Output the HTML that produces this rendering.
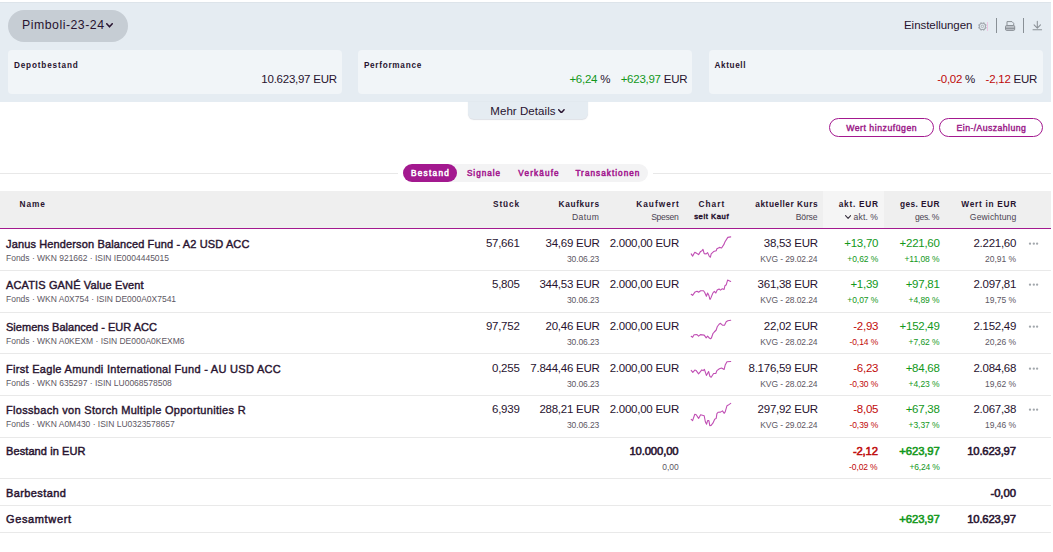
<!DOCTYPE html>
<html lang="de">
<head>
<meta charset="utf-8">
<title>Depot</title>
<style>
*{box-sizing:border-box;margin:0;padding:0}
html,body{width:1053px;height:552px;overflow:hidden;background:#fff}
body{font-family:"Liberation Sans",sans-serif;color:#28132f;position:relative}
.t{position:absolute;white-space:nowrap}
.b{position:absolute;display:block}
</style>
</head>
<body>
<div class="b" style="left:0px;top:2px;width:1051px;height:100.4px;background:#e5ecf2;border-top:1px solid #dde4ea;"></div>
<div class="b" style="left:8px;top:10px;width:120px;height:32px;background:#c6cdd4;border-radius:16px;"></div>
<div class="t" style="top:17.84px;font-size:12.3px;line-height:15px;color:#28132f;letter-spacing:0.509px;left:22px;">Pimboli-23-24</div>
<svg class="b" style="left:105.8px;top:23.2px" width="7" height="4.6" viewBox="0 0 7 4.6"><path d="M0.75 0.75 L3.5 3.8499999999999996 L6.25 0.75" fill="none" stroke="#28132f" stroke-width="1.5" stroke-linecap="round" stroke-linejoin="round"/></svg>
<div class="t" style="top:18.22px;font-size:11.5px;line-height:14px;letter-spacing:-0.05px;left:904px;">Einstellungen</div>
<svg class="b" style="left:0;top:0" width="1053" height="40"><g fill="none" stroke="#a3a9af"><circle cx="982.4" cy="26.4" r="3.1" stroke-width="1.1"/><circle cx="982.4" cy="26.4" r="1.25" stroke-width=".8"/><g stroke-width="1.7"><line x1="985.26" y1="27.59" x2="986.33" y2="28.03"/><line x1="983.59" y1="29.26" x2="984.03" y2="30.33"/><line x1="981.21" y1="29.26" x2="980.77" y2="30.33"/><line x1="979.54" y1="27.59" x2="978.47" y2="28.03"/><line x1="979.54" y1="25.21" x2="978.47" y2="24.77"/><line x1="981.21" y1="23.54" x2="980.77" y2="22.47"/><line x1="983.59" y1="23.54" x2="984.03" y2="22.47"/><line x1="985.26" y1="25.21" x2="986.33" y2="24.77"/></g></g></svg>
<div class="b" style="left:987.4px;top:22px;width:1px;height:9px;background:#ecc6e2;"></div>
<div class="b" style="left:996px;top:18px;width:1px;height:15px;background:#899096;"></div>
<svg class="b" style="left:0;top:0" width="1053" height="40"><g fill="none" stroke="#8b9197" stroke-width="1" stroke-linejoin="round"><path d="M1007 25.6V21.6h5l1.700 1.700V25.600"/><rect x="1005.5" y="25.5" width="9.200" height="4.900" rx="1.200" fill="#8b9197" fill-opacity=".45"/><path d="M1005.500 28.300h9.200" stroke="#7f868c" stroke-width=".9"/></g></svg>
<div class="b" style="left:1023px;top:18px;width:1px;height:15px;background:#899096;"></div>
<svg class="b" style="left:0;top:0" width="1053" height="40"><g fill="none" stroke="#8b9197" stroke-width="1.05" stroke-linecap="round" stroke-linejoin="round"><path d="M1037.300 21.300v6.600M1034.100 24.900l3.200 3.200 3.200-3.200M1033 29.700h8.600"/></g></svg>
<div class="b" style="left:8px;top:50px;width:334px;height:43.8px;background:#f1f5f8;border-radius:4px;"></div>
<div class="b" style="left:357.8px;top:50px;width:334.6px;height:43.8px;background:#f1f5f8;border-radius:4px;"></div>
<div class="b" style="left:709.3px;top:50px;width:333.8px;height:43.8px;background:#f1f5f8;border-radius:4px;"></div>
<div class="t" style="top:61.16px;font-size:8.2px;line-height:10px;font-weight:bold;letter-spacing:0.848px;left:13.9px;">Depotbestand</div>
<div class="t" style="top:61.16px;font-size:8.2px;line-height:10px;font-weight:bold;letter-spacing:0.727px;left:363.9px;">Performance</div>
<div class="t" style="top:61.16px;font-size:8.2px;line-height:10px;font-weight:bold;letter-spacing:0.61px;left:714.5px;">Aktuell</div>
<div class="t" style="top:72.02px;font-size:11.5px;line-height:14px;letter-spacing:-0.25px;right:716.25px;">10.623,97 EUR</div>
<div class="t" style="top:72.02px;font-size:11.5px;line-height:14px;letter-spacing:-0.25px;right:442.85px;"><span style="color:#12981a">+6,24</span> %</div>
<div class="t" style="top:72.02px;font-size:11.5px;line-height:14px;letter-spacing:-0.25px;right:365.75px;"><span style="color:#12981a">+623,97</span> EUR</div>
<div class="t" style="top:72.02px;font-size:11.5px;line-height:14px;letter-spacing:-0.25px;right:77.95px;"><span style="color:#bf0a0a">-0,02</span> %</div>
<div class="t" style="top:72.02px;font-size:11.5px;line-height:14px;letter-spacing:-0.25px;right:15.95px;"><span style="color:#bf0a0a">-2,12</span> EUR</div>
<div class="b" style="left:468px;top:101.5px;width:120px;height:17.4px;background:#e5ecf2;border-radius:0 0 6px 6px;box-shadow:0 .5px 1px rgba(120,130,150,.25);"></div>
<div class="t" style="top:104.32px;font-size:11.5px;line-height:14px;letter-spacing:0.059px;left:490.3px;">Mehr Details</div>
<svg class="b" style="left:558.3px;top:108.6px" width="6.8" height="4.5" viewBox="0 0 6.8 4.5"><path d="M0.7 0.7 L3.4 3.8 L6.1 0.7" fill="none" stroke="#28132f" stroke-width="1.4" stroke-linecap="round" stroke-linejoin="round"/></svg>
<div class="b" style="left:829px;top:118px;width:105px;height:19px;background:#fff;border:1px solid #a3198f;border-radius:10px;"></div>
<div class="b" style="left:939px;top:118px;width:104px;height:19px;background:#fff;border:1px solid #a3198f;border-radius:10px;"></div>
<div class="t" style="top:122.99px;font-size:8.7px;line-height:11px;color:#9a1787;-webkit-text-stroke:0.4px #9a1787;letter-spacing:0.529px;left:881.66px;transform:translateX(-50%);">Wert hinzufügen</div>
<div class="t" style="top:122.99px;font-size:8.7px;line-height:11px;color:#9a1787;-webkit-text-stroke:0.4px #9a1787;letter-spacing:0.424px;left:991.41px;transform:translateX(-50%);">Ein-/Auszahlung</div>
<div class="b" style="left:0px;top:173px;width:1051px;height:1px;background:#e8e8e8;"></div>
<div class="b" style="left:398px;top:163px;width:254.5px;height:21px;background:#fff;"></div>
<div class="b" style="left:403px;top:164px;width:245px;height:18px;background:#f3f3f4;border-radius:9px;"></div>
<div class="b" style="left:403px;top:164px;width:54px;height:18px;background:#a3198f;border-radius:9px;"></div>
<div class="t" style="top:168.76px;font-size:8.2px;line-height:10px;color:#fff;-webkit-text-stroke:0.5px #fff;letter-spacing:1.302px;left:411px;">Bestand</div>
<div class="t" style="top:168.76px;font-size:8.2px;line-height:10px;color:#a3198f;-webkit-text-stroke:0.5px #a3198f;letter-spacing:0.991px;left:466.9px;">Signale</div>
<div class="t" style="top:168.76px;font-size:8.2px;line-height:10px;color:#a3198f;-webkit-text-stroke:0.5px #a3198f;letter-spacing:1.147px;left:518.3px;">Verkäufe</div>
<div class="t" style="top:168.76px;font-size:8.2px;line-height:10px;color:#a3198f;-webkit-text-stroke:0.5px #a3198f;letter-spacing:1.037px;left:575.4px;">Transaktionen</div>
<div class="b" style="left:0px;top:191px;width:1051px;height:37.3px;background:#efefef;"></div>
<div class="b" style="left:823px;top:191px;width:61px;height:37.3px;background:#f5f5f5;"></div>
<div class="b" style="left:0px;top:228px;width:1051px;height:1.3px;background:#a3198f;"></div>
<div class="t" style="top:199.12px;font-size:8.3px;line-height:10px;font-weight:bold;letter-spacing:0.998px;left:19.4px;">Name</div>
<div class="t" style="top:199.12px;font-size:8.3px;line-height:10px;font-weight:bold;letter-spacing:0.824px;right:533.18px;">Stück</div>
<div class="t" style="top:199.12px;font-size:8.3px;line-height:10px;font-weight:bold;letter-spacing:0.646px;right:453.35px;">Kaufkurs</div>
<div class="t" style="top:211.52px;font-size:8.6px;line-height:11px;color:#4b4452;letter-spacing:0.442px;right:453.56px;">Datum</div>
<div class="t" style="top:199.12px;font-size:8.3px;line-height:10px;font-weight:bold;letter-spacing:1.027px;right:373.17px;">Kaufwert</div>
<div class="t" style="top:211.52px;font-size:8.6px;line-height:11px;color:#4b4452;letter-spacing:-0.294px;right:374.49px;">Spesen</div>
<div class="t" style="top:199.12px;font-size:8.3px;line-height:10px;font-weight:bold;letter-spacing:0.526px;right:234.97px;">aktueller Kurs</div>
<div class="t" style="top:211.52px;font-size:8.6px;line-height:11px;color:#4b4452;letter-spacing:-0.167px;right:235.67px;">Börse</div>
<div class="t" style="top:199.12px;font-size:8.3px;line-height:10px;font-weight:bold;letter-spacing:0.738px;right:174.26px;">akt. EUR</div>
<div class="t" style="top:211.52px;font-size:8.6px;line-height:11px;color:#4b4452;letter-spacing:0.101px;right:174.90px;">akt. %</div>
<div class="t" style="top:199.12px;font-size:8.3px;line-height:10px;font-weight:bold;letter-spacing:0.452px;right:113.05px;">ges. EUR</div>
<div class="t" style="top:211.52px;font-size:8.6px;line-height:11px;color:#4b4452;letter-spacing:-0.378px;right:113.88px;">ges. %</div>
<div class="t" style="top:199.12px;font-size:8.3px;line-height:10px;font-weight:bold;letter-spacing:0.719px;right:35.98px;">Wert in EUR</div>
<div class="t" style="top:211.52px;font-size:8.6px;line-height:11px;color:#4b4452;letter-spacing:0.121px;right:36.58px;">Gewichtung</div>
<div class="t" style="top:199.12px;font-size:8.3px;line-height:10px;font-weight:bold;letter-spacing:1.056px;left:711.93px;transform:translateX(-50%);">Chart</div>
<div class="t" style="top:212.33px;font-size:7.7px;line-height:10px;-webkit-text-stroke:0.45px #28132f;letter-spacing:0.555px;left:711.68px;transform:translateX(-50%);">seit Kauf</div>
<svg class="b" style="left:845.3px;top:215.3px" width="6.2" height="3.9" viewBox="0 0 6.2 3.9"><path d="M0.55 0.55 L3.1 3.3499999999999996 L5.65 0.55" fill="none" stroke="#3a3340" stroke-width="1.1" stroke-linecap="round" stroke-linejoin="round"/></svg>
<div class="b" style="left:0px;top:270px;width:1051px;height:1px;background:#e9e9e9;"></div>
<div class="t" style="top:237.49px;font-size:11px;line-height:14px;-webkit-text-stroke:0.4px #28132f;letter-spacing:0.135px;left:6px;">Janus Henderson Balanced Fund - A2 USD ACC</div>
<div class="t" style="top:252.85px;font-size:8.5px;line-height:11px;color:#5d5763;letter-spacing:-0.013px;left:6px;">Fonds · WKN 921662 · ISIN IE0004445015</div>
<div class="t" style="top:236.32px;font-size:11.5px;line-height:14px;letter-spacing:-0.25px;right:533.45px;">57,661</div>
<div class="t" style="top:236.32px;font-size:11.5px;line-height:14px;letter-spacing:-0.25px;right:453.45px;">34,69 EUR</div>
<div class="t" style="top:253.85px;font-size:8.5px;line-height:11px;color:#5d5763;letter-spacing:-0.1px;right:453.80px;">30.06.23</div>
<div class="t" style="top:236.32px;font-size:11.5px;line-height:14px;letter-spacing:-0.25px;right:374.05px;">2.000,00 EUR</div>
<div class="t" style="top:236.32px;font-size:11.5px;line-height:14px;letter-spacing:-0.25px;right:235.25px;">38,53 EUR</div>
<div class="t" style="top:253.85px;font-size:8.5px;line-height:11px;color:#5d5763;letter-spacing:-0.107px;right:235.61px;">KVG - 29.02.24</div>
<div class="t" style="top:236.32px;font-size:11.5px;line-height:14px;color:#12981a;letter-spacing:-0.25px;right:174.75px;">+13,70</div>
<div class="t" style="top:253.85px;font-size:8.5px;line-height:11px;color:#12981a;letter-spacing:-0.05px;right:174.65px;">+0,62 %</div>
<div class="t" style="top:236.32px;font-size:11.5px;line-height:14px;color:#12981a;letter-spacing:-0.25px;right:113.35px;">+221,60</div>
<div class="t" style="top:253.85px;font-size:8.5px;line-height:11px;color:#12981a;letter-spacing:-0.05px;right:113.45px;">+11,08 %</div>
<div class="t" style="top:236.32px;font-size:11.5px;line-height:14px;letter-spacing:-0.25px;right:36.85px;">2.221,60</div>
<div class="t" style="top:253.85px;font-size:8.5px;line-height:11px;color:#5d5763;letter-spacing:-0.05px;right:37.05px;">20,91 %</div>
<svg class="b" style="left:1026px;top:239px" width="16" height="10"><g fill="#a2a7ac"><circle cx="4" cy="4.700" r="1.150"/><circle cx="7.800" cy="4.700" r="1.150"/><circle cx="11.100" cy="4.700" r="1.150"/></g></svg>
<svg class="b" style="left:0;top:0" width="1053" height="552"><polyline points="691.2,253.9 692.6,256.1 694.8,252.3 696.6,253.3 698.6,254.6 700.6,251.4 702.0,250.7 703.0,249.4 704.2,253.6 706.2,253.9 707.6,252.6 709.3,256.4 710.4,257.2 711.2,253.9 713.6,251.6 716.2,250.7 716.9,248.7 719.4,247.4 721.6,248.0 724.1,244.1 724.9,242.0 727.8,237.4 730.7,236.9" fill="none" stroke="#c04fb4" stroke-width="1.1" stroke-linejoin="round" stroke-linecap="round"/></svg>
<div class="b" style="left:0px;top:312px;width:1051px;height:1px;background:#e9e9e9;"></div>
<div class="t" style="top:278.49px;font-size:11px;line-height:14px;-webkit-text-stroke:0.4px #28132f;letter-spacing:0.132px;left:6px;">ACATIS GANÉ Value Event</div>
<div class="t" style="top:293.85px;font-size:8.5px;line-height:11px;color:#5d5763;letter-spacing:-0.013px;left:6px;">Fonds · WKN A0X754 · ISIN DE000A0X7541</div>
<div class="t" style="top:277.32px;font-size:11.5px;line-height:14px;letter-spacing:-0.25px;right:533.45px;">5,805</div>
<div class="t" style="top:277.32px;font-size:11.5px;line-height:14px;letter-spacing:-0.25px;right:453.45px;">344,53 EUR</div>
<div class="t" style="top:294.85px;font-size:8.5px;line-height:11px;color:#5d5763;letter-spacing:-0.1px;right:453.80px;">30.06.23</div>
<div class="t" style="top:277.32px;font-size:11.5px;line-height:14px;letter-spacing:-0.25px;right:374.05px;">2.000,00 EUR</div>
<div class="t" style="top:277.32px;font-size:11.5px;line-height:14px;letter-spacing:-0.25px;right:235.25px;">361,38 EUR</div>
<div class="t" style="top:294.85px;font-size:8.5px;line-height:11px;color:#5d5763;letter-spacing:-0.107px;right:235.61px;">KVG - 28.02.24</div>
<div class="t" style="top:277.32px;font-size:11.5px;line-height:14px;color:#12981a;letter-spacing:-0.25px;right:174.75px;">+1,39</div>
<div class="t" style="top:294.85px;font-size:8.5px;line-height:11px;color:#12981a;letter-spacing:-0.05px;right:174.65px;">+0,07 %</div>
<div class="t" style="top:277.32px;font-size:11.5px;line-height:14px;color:#12981a;letter-spacing:-0.25px;right:113.35px;">+97,81</div>
<div class="t" style="top:294.85px;font-size:8.5px;line-height:11px;color:#12981a;letter-spacing:-0.05px;right:113.45px;">+4,89 %</div>
<div class="t" style="top:277.32px;font-size:11.5px;line-height:14px;letter-spacing:-0.25px;right:36.85px;">2.097,81</div>
<div class="t" style="top:294.85px;font-size:8.5px;line-height:11px;color:#5d5763;letter-spacing:-0.05px;right:37.05px;">19,75 %</div>
<svg class="b" style="left:1026px;top:280px" width="16" height="10"><g fill="#a2a7ac"><circle cx="4" cy="4.700" r="1.150"/><circle cx="7.800" cy="4.700" r="1.150"/><circle cx="11.100" cy="4.700" r="1.150"/></g></svg>
<svg class="b" style="left:0;top:0" width="1053" height="552"><polyline points="691.2,294.3 692.6,295.3 695.1,291.9 697.0,291.2 698.6,292.3 700.6,290.7 703.5,290.7 704.6,292.3 706.4,296.3 707.6,293.0 708.9,295.6 710.0,299.4 711.1,297.4 712.9,293.0 714.3,291.4 715.8,293.0 717.2,290.1 719.1,289.0 720.5,290.1 722.3,288.8 724.1,289.4 724.9,285.8 726.3,284.7 727.6,280.1 730.7,281.4" fill="none" stroke="#c04fb4" stroke-width="1.1" stroke-linejoin="round" stroke-linecap="round"/></svg>
<div class="b" style="left:0px;top:353px;width:1051px;height:1px;background:#e9e9e9;"></div>
<div class="t" style="top:320.49px;font-size:11px;line-height:14px;-webkit-text-stroke:0.4px #28132f;letter-spacing:0.024px;left:6px;">Siemens Balanced - EUR ACC</div>
<div class="t" style="top:335.85px;font-size:8.5px;line-height:11px;color:#5d5763;letter-spacing:-0.013px;left:6px;">Fonds · WKN A0KEXM · ISIN DE000A0KEXM6</div>
<div class="t" style="top:319.32px;font-size:11.5px;line-height:14px;letter-spacing:-0.25px;right:533.45px;">97,752</div>
<div class="t" style="top:319.32px;font-size:11.5px;line-height:14px;letter-spacing:-0.25px;right:453.45px;">20,46 EUR</div>
<div class="t" style="top:336.85px;font-size:8.5px;line-height:11px;color:#5d5763;letter-spacing:-0.1px;right:453.80px;">30.06.23</div>
<div class="t" style="top:319.32px;font-size:11.5px;line-height:14px;letter-spacing:-0.25px;right:374.05px;">2.000,00 EUR</div>
<div class="t" style="top:319.32px;font-size:11.5px;line-height:14px;letter-spacing:-0.25px;right:235.25px;">22,02 EUR</div>
<div class="t" style="top:336.85px;font-size:8.5px;line-height:11px;color:#5d5763;letter-spacing:-0.107px;right:235.61px;">KVG - 28.02.24</div>
<div class="t" style="top:319.32px;font-size:11.5px;line-height:14px;color:#bf0a0a;letter-spacing:-0.25px;right:174.75px;">-2,93</div>
<div class="t" style="top:336.85px;font-size:8.5px;line-height:11px;color:#bf0a0a;letter-spacing:-0.05px;right:174.65px;">-0,14 %</div>
<div class="t" style="top:319.32px;font-size:11.5px;line-height:14px;color:#12981a;letter-spacing:-0.25px;right:113.35px;">+152,49</div>
<div class="t" style="top:336.85px;font-size:8.5px;line-height:11px;color:#12981a;letter-spacing:-0.05px;right:113.45px;">+7,62 %</div>
<div class="t" style="top:319.32px;font-size:11.5px;line-height:14px;letter-spacing:-0.25px;right:36.85px;">2.152,49</div>
<div class="t" style="top:336.85px;font-size:8.5px;line-height:11px;color:#5d5763;letter-spacing:-0.05px;right:37.05px;">20,26 %</div>
<svg class="b" style="left:1026px;top:322px" width="16" height="10"><g fill="#a2a7ac"><circle cx="4" cy="4.700" r="1.150"/><circle cx="7.800" cy="4.700" r="1.150"/><circle cx="11.100" cy="4.700" r="1.150"/></g></svg>
<svg class="b" style="left:0;top:0" width="1053" height="552"><polyline points="691.2,336.3 692.6,337.3 694.1,334.7 697.0,334.6 698.6,336.2 700.4,334.6 704.2,335.1 706.2,337.8 707.6,336.2 709.3,338.0 710.4,338.7 711.4,338.0 712.9,333.7 714.3,332.0 716.2,330.0 717.2,326.8 719.1,324.2 720.5,323.3 722.7,325.3 724.5,325.2 726.2,321.7 727.8,320.8 730.7,320.2" fill="none" stroke="#c04fb4" stroke-width="1.1" stroke-linejoin="round" stroke-linecap="round"/></svg>
<div class="b" style="left:0px;top:395px;width:1051px;height:1px;background:#e9e9e9;"></div>
<div class="t" style="top:362.49px;font-size:11px;line-height:14px;-webkit-text-stroke:0.4px #28132f;letter-spacing:0.291px;left:6px;">First Eagle Amundi International Fund - AU USD ACC</div>
<div class="t" style="top:377.85px;font-size:8.5px;line-height:11px;color:#5d5763;letter-spacing:-0.013px;left:6px;">Fonds · WKN 635297 · ISIN LU0068578508</div>
<div class="t" style="top:361.32px;font-size:11.5px;line-height:14px;letter-spacing:-0.25px;right:533.45px;">0,255</div>
<div class="t" style="top:361.32px;font-size:11.5px;line-height:14px;letter-spacing:-0.25px;right:453.45px;">7.844,46 EUR</div>
<div class="t" style="top:378.85px;font-size:8.5px;line-height:11px;color:#5d5763;letter-spacing:-0.1px;right:453.80px;">30.06.23</div>
<div class="t" style="top:361.32px;font-size:11.5px;line-height:14px;letter-spacing:-0.25px;right:374.05px;">2.000,00 EUR</div>
<div class="t" style="top:361.32px;font-size:11.5px;line-height:14px;letter-spacing:-0.25px;right:235.25px;">8.176,59 EUR</div>
<div class="t" style="top:378.85px;font-size:8.5px;line-height:11px;color:#5d5763;letter-spacing:-0.107px;right:235.61px;">KVG - 28.02.24</div>
<div class="t" style="top:361.32px;font-size:11.5px;line-height:14px;color:#bf0a0a;letter-spacing:-0.25px;right:174.75px;">-6,23</div>
<div class="t" style="top:378.85px;font-size:8.5px;line-height:11px;color:#bf0a0a;letter-spacing:-0.05px;right:174.65px;">-0,30 %</div>
<div class="t" style="top:361.32px;font-size:11.5px;line-height:14px;color:#12981a;letter-spacing:-0.25px;right:113.35px;">+84,68</div>
<div class="t" style="top:378.85px;font-size:8.5px;line-height:11px;color:#12981a;letter-spacing:-0.05px;right:113.45px;">+4,23 %</div>
<div class="t" style="top:361.32px;font-size:11.5px;line-height:14px;letter-spacing:-0.25px;right:36.85px;">2.084,68</div>
<div class="t" style="top:378.85px;font-size:8.5px;line-height:11px;color:#5d5763;letter-spacing:-0.05px;right:37.05px;">19,62 %</div>
<svg class="b" style="left:1026px;top:364px" width="16" height="10"><g fill="#a2a7ac"><circle cx="4" cy="4.700" r="1.150"/><circle cx="7.800" cy="4.700" r="1.150"/><circle cx="11.100" cy="4.700" r="1.150"/></g></svg>
<svg class="b" style="left:0;top:0" width="1053" height="552"><polyline points="691.2,370.4 692.8,372.4 694.8,370.1 696.2,370.6 698.6,373.8 700.4,371.7 701.8,369.9 703.1,370.6 704.4,369.3 706.4,375.4 708.6,371.5 710.0,376.6 711.2,377.3 713.6,373.5 715.8,373.5 716.9,370.6 719.4,368.8 721.6,368.0 724.1,369.5 725.2,365.1 727.0,361.7 730.7,361.5" fill="none" stroke="#c04fb4" stroke-width="1.1" stroke-linejoin="round" stroke-linecap="round"/></svg>
<div class="b" style="left:0px;top:437px;width:1051px;height:1px;background:#e9e9e9;"></div>
<div class="t" style="top:403.49px;font-size:11px;line-height:14px;-webkit-text-stroke:0.4px #28132f;letter-spacing:0.304px;left:6px;">Flossbach von Storch Multiple Opportunities R</div>
<div class="t" style="top:418.85px;font-size:8.5px;line-height:11px;color:#5d5763;letter-spacing:-0.013px;left:6px;">Fonds · WKN A0M430 · ISIN LU0323578657</div>
<div class="t" style="top:402.32px;font-size:11.5px;line-height:14px;letter-spacing:-0.25px;right:533.45px;">6,939</div>
<div class="t" style="top:402.32px;font-size:11.5px;line-height:14px;letter-spacing:-0.25px;right:453.45px;">288,21 EUR</div>
<div class="t" style="top:419.85px;font-size:8.5px;line-height:11px;color:#5d5763;letter-spacing:-0.1px;right:453.80px;">30.06.23</div>
<div class="t" style="top:402.32px;font-size:11.5px;line-height:14px;letter-spacing:-0.25px;right:374.05px;">2.000,00 EUR</div>
<div class="t" style="top:402.32px;font-size:11.5px;line-height:14px;letter-spacing:-0.25px;right:235.25px;">297,92 EUR</div>
<div class="t" style="top:419.85px;font-size:8.5px;line-height:11px;color:#5d5763;letter-spacing:-0.107px;right:235.61px;">KVG - 29.02.24</div>
<div class="t" style="top:402.32px;font-size:11.5px;line-height:14px;color:#bf0a0a;letter-spacing:-0.25px;right:174.75px;">-8,05</div>
<div class="t" style="top:419.85px;font-size:8.5px;line-height:11px;color:#bf0a0a;letter-spacing:-0.05px;right:174.65px;">-0,39 %</div>
<div class="t" style="top:402.32px;font-size:11.5px;line-height:14px;color:#12981a;letter-spacing:-0.25px;right:113.35px;">+67,38</div>
<div class="t" style="top:419.85px;font-size:8.5px;line-height:11px;color:#12981a;letter-spacing:-0.05px;right:113.45px;">+3,37 %</div>
<div class="t" style="top:402.32px;font-size:11.5px;line-height:14px;letter-spacing:-0.25px;right:36.85px;">2.067,38</div>
<div class="t" style="top:419.85px;font-size:8.5px;line-height:11px;color:#5d5763;letter-spacing:-0.05px;right:37.05px;">19,46 %</div>
<svg class="b" style="left:1026px;top:405px" width="16" height="10"><g fill="#a2a7ac"><circle cx="4" cy="4.700" r="1.150"/><circle cx="7.800" cy="4.700" r="1.150"/><circle cx="11.100" cy="4.700" r="1.150"/></g></svg>
<svg class="b" style="left:0;top:0" width="1053" height="552"><polyline points="691.2,419.3 692.6,420.6 694.8,414.2 696.2,414.8 698.6,418.4 700.6,414.8 704.2,415.8 705.4,422.0 706.6,424.2 707.6,420.6 708.9,420.6 709.8,425.6 711.1,425.4 712.9,423.2 714.7,419.3 716.2,418.4 716.9,413.7 718.3,412.2 720.5,412.1 722.5,410.9 724.1,413.3 725.2,411.9 727.0,405.7 728.3,405.1 730.7,403.4" fill="none" stroke="#c04fb4" stroke-width="1.1" stroke-linejoin="round" stroke-linecap="round"/></svg>
<div class="t" style="top:444.09px;font-size:11px;line-height:14px;-webkit-text-stroke:0.45px #28132f;letter-spacing:0.095px;left:6px;">Bestand in EUR</div>
<div class="t" style="top:444.08px;font-size:11.3px;line-height:14px;-webkit-text-stroke:0.55px #28132f;letter-spacing:-0.134px;right:374.53px;">10.000,00</div>
<div class="t" style="top:461.75px;font-size:8.5px;line-height:11px;color:#5d5763;letter-spacing:-0.05px;right:374.45px;">0,00</div>
<div class="t" style="top:444.08px;font-size:11.3px;line-height:14px;color:#bf0a0a;-webkit-text-stroke:0.55px #bf0a0a;letter-spacing:-0.164px;right:175.16px;">-2,12</div>
<div class="t" style="top:461.75px;font-size:8.5px;line-height:11px;color:#bf0a0a;letter-spacing:-0.132px;right:175.53px;">-0,02 %</div>
<div class="t" style="top:444.08px;font-size:11.3px;line-height:14px;color:#12981a;-webkit-text-stroke:0.55px #12981a;letter-spacing:-0.11px;right:113.31px;">+623,97</div>
<div class="t" style="top:461.75px;font-size:8.5px;line-height:11px;color:#12981a;letter-spacing:-0.171px;right:113.37px;">+6,24 %</div>
<div class="t" style="top:444.08px;font-size:11.3px;line-height:14px;-webkit-text-stroke:0.55px #28132f;letter-spacing:-0.184px;right:37.18px;">10.623,97</div>
<div class="b" style="left:0px;top:478px;width:1051px;height:1px;background:#e9e9e9;"></div>
<div class="t" style="top:486.49px;font-size:11px;line-height:14px;-webkit-text-stroke:0.45px #28132f;letter-spacing:0.393px;left:6px;">Barbestand</div>
<div class="t" style="top:485.88px;font-size:11.3px;line-height:14px;-webkit-text-stroke:0.55px #28132f;letter-spacing:-0.039px;right:37.04px;">-0,00</div>
<div class="b" style="left:0px;top:505px;width:1051px;height:1px;background:#e9e9e9;"></div>
<div class="t" style="top:512.09px;font-size:11px;line-height:14px;-webkit-text-stroke:0.45px #28132f;letter-spacing:0.634px;left:6px;">Gesamtwert</div>
<div class="t" style="top:512.08px;font-size:11.3px;line-height:14px;color:#12981a;-webkit-text-stroke:0.55px #12981a;letter-spacing:-0.11px;right:113.31px;">+623,97</div>
<div class="t" style="top:512.08px;font-size:11.3px;line-height:14px;-webkit-text-stroke:0.55px #28132f;letter-spacing:-0.184px;right:37.18px;">10.623,97</div>
<div class="b" style="left:0px;top:532px;width:1051px;height:1px;background:#e9e9e9;"></div>
</body>
</html>
